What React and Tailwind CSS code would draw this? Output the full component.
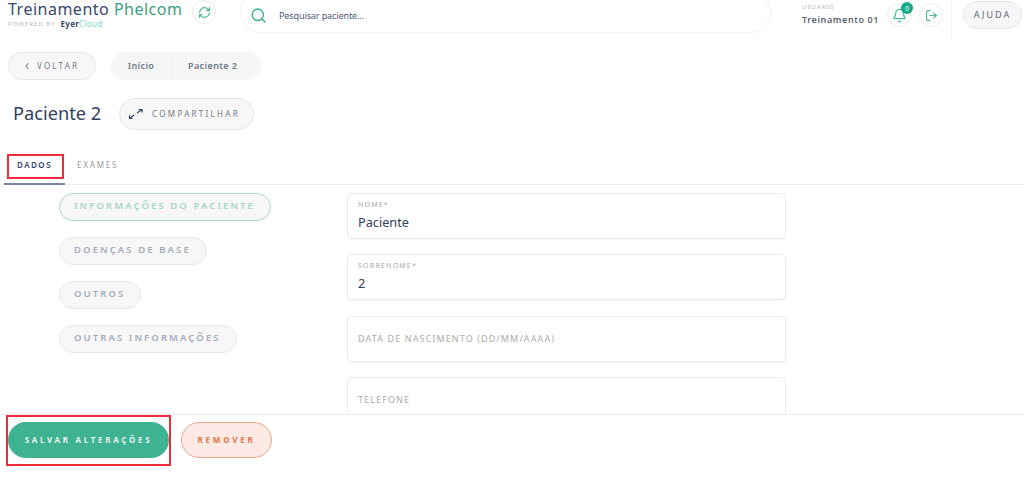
import React from 'react';
import { ChevronLeft, RefreshCw, Search, Bell, LogOut } from 'lucide-react';

const sections = [
  { label: 'INFORMAÇÕES DO PACIENTE', active: true },
  { label: 'DOENÇAS DE BASE' },
  { label: 'OUTROS' },
  { label: 'OUTRAS INFORMAÇÕES' },
];

function Field({ label, value, last }) {
  return (
    <div className={`w-[439px] shrink-0 rounded border border-[#ececec] bg-white px-[10px] shadow-[0_1px_1px_rgba(0,0,0,0.03)] ${last ? 'h-[46px]' : 'h-[46px] mb-[15.4px]'}`}>
      {value ? (
        <div>
          <div className="mt-[6px] text-[7px] leading-[10px] tracking-[1.2px] text-[#a9a9a9]">{label}</div>
          <div className="mt-[3px] text-[12.7px] leading-[18px] text-[#33415c]">{value}</div>
        </div>
      ) : (
        <div className="mt-[15px] text-[9px] leading-[14px] tracking-[1.1px] text-[#ababab]">{label}</div>
      )}
    </div>
  );
}

export default function App() {
  return (
    <div className="relative flex h-[483px] w-[1024px] flex-col overflow-hidden bg-white font-['Noto_Sans','Open_Sans',sans-serif]">
      {/* Header */}
      <div className="flex h-[52px] shrink-0 items-start">
        <div className="ml-2 w-[184px] shrink-0 pt-[1px]">
          <div className="text-[16px] leading-[16px] tracking-[0.5px] text-[#35496a]">
            Treinamento <span className="text-[#3d9d83]">Phelcom</span>
          </div>
          <div className="mt-[3px] flex items-center text-[6px] leading-[8px] tracking-[1px] text-[#b9b9b9]">
            POWERED BY
            <span className="ml-[5px] text-[8px] font-bold tracking-[0.3px] text-[#35496a]">Eyer<span className="font-normal text-[#7fd3c6]">Cloud</span></span>
          </div>
        </div>
        <div className="flex h-6 w-6 shrink-0 items-center justify-center rounded-full border border-[#ececec]">
          <RefreshCw size={13} className="text-[#45b594]" />
        </div>
        <div className="ml-6 mt-[-8px] flex h-[41px] w-[531px] shrink-0 items-center rounded-full border border-[#f1f1f1] pt-[6px] pl-[9px]">
          <Search size={17} strokeWidth={2.2} className="text-[#45b594]" />
          <span className="ml-[12px] text-[9px] tracking-[-0.1px] text-[#4a5a78]">Pesquisar paciente...</span>
        </div>
        <div className="ml-[31px] w-[85px] shrink-0 pt-[3px]">
          <div className="text-[6px] leading-[8px] tracking-[0.9px] text-[#b5b5b5]">USUÁRIO</div>
          <div className="mt-[3px] text-[9px] leading-[12px] font-semibold tracking-[0.6px] text-[#5c6670]">Treinamento 01</div>
        </div>
        <div className="relative mt-[3px] flex h-6 w-6 shrink-0 items-center justify-center rounded-full border border-[#ececec]">
          <Bell size={15} className="text-[#45c0a0]" />
          <span className="absolute top-[-2px] right-[-3px] flex h-3 w-3 items-center justify-center rounded-full bg-[#16a98c] text-[7px] leading-none text-white">0</span>
        </div>
        <div className="ml-2 mt-[3px] flex h-6 w-6 shrink-0 items-center justify-center rounded-full border border-[#ececec]">
          <LogOut size={13} className="text-[#45b594]" />
        </div>
        <div className="ml-2 h-10 w-px shrink-0 bg-[#f1f1f1]" />
        <div className="ml-[11px] mt-[1px] flex h-[28px] w-[59px] shrink-0 items-center justify-center rounded-full border border-[#e6e6e6] bg-[#f6f6f6] text-[9px] tracking-[2px] text-[#5c6670]">
          AJUDA
        </div>
      </div>

      {/* Voltar + breadcrumb */}
      <div className="flex h-[28px] shrink-0 items-center pl-2">
        <div className="flex h-[28px] w-[88px] items-center rounded-full border border-[#e6e6e6] bg-[#f7f7f7] pl-[13px] text-[8px] tracking-[2.2px] text-[#707a86]">
          <ChevronLeft size={10} strokeWidth={2.5} />
          <span className="ml-[5px]">VOLTAR</span>
        </div>
        <div className="ml-[15px] flex h-[28px] w-[150px] items-center rounded-full bg-[#f6f6f6] text-[9px] font-semibold tracking-[0.4px] text-[#707a86]">
          <span className="flex h-full w-[61px] items-center justify-center border-r border-[#eeeeee]">Início</span>
          <span className="ml-[16px]">Paciente 2</span>
        </div>
      </div>

      {/* Title */}
      <div className="mt-[18px] flex h-[32px] shrink-0 items-center pl-[13px]">
        <h1 className="-mt-[2px] text-[18.2px] leading-6 text-[#33415c]">Paciente 2</h1>
        <div className="ml-[18px] flex h-[32px] w-[135px] items-center rounded-full border border-[#e6e6e6] bg-[#f7f7f7] pl-[8px] text-[8px] tracking-[2.3px] text-[#707a86]">
          <svg width="16" height="12" viewBox="0 0 16 12" fill="none" stroke="#35496a" strokeWidth="1.2">
            <path d="M1.5 10.5 L6 7 M1.5 7.5 V10.5 H4.5" />
            <path d="M9 5 L14 1.5 M10.5 1.5 H14 V4.5" />
          </svg>
          <span className="ml-[8px]">COMPARTILHAR</span>
        </div>
      </div>

      {/* Tabs */}
      <div className="mt-[24px] flex h-[31px] shrink-0 items-start border-b border-[#ececec] pl-1">
        <div className="flex h-[31px] w-[61px] justify-center border-b-2 border-[#7d88a8] pt-[4px] text-[8px] leading-[14px] font-semibold tracking-[1.5px] text-[#35496a]">DADOS</div>
        <div className="ml-3 pt-[4px] text-[8px] leading-[14px] tracking-[1.8px] text-[#9a9a9a]">EXAMES</div>
      </div>

      {/* Content */}
      <div className="flex min-h-0 flex-1 overflow-hidden pt-[8px]">
        <div className="ml-[59px] flex w-[288px] shrink-0 flex-col items-start gap-4">
          {sections.map((s) => (
            <div
              key={s.label}
              className={`flex h-[28px] items-center rounded-full border pl-[14px] pr-[15px] pb-[2px] text-[9.5px] font-semibold tracking-[2.1px] ${s.active ? 'border-[#a9d9c8] bg-[#f7f7f7] text-[#a6d6c6]' : 'border-[#e8e8e8] bg-[#f7f7f7] text-[#a3acba]'}`}
            >
              {s.label}
            </div>
          ))}
        </div>
        <div className="flex flex-col">
          <Field label="NOME*" value="Paciente" />
          <Field label="SOBRENOME*" value="2" />
          <Field label="DATA DE NASCIMENTO (DD/MM/AAAA)" />
          <Field label="TELEFONE" last />
        </div>
      </div>

      {/* Footer */}
      <div className="flex h-[69px] shrink-0 items-start gap-3 border-t border-[#ececec] pl-2 pt-[7px]">
        <div className="flex h-9 w-[161px] items-center justify-center rounded-full bg-[#3fb391] text-[8px] font-bold tracking-[2.7px] text-[#e3f5ee]">
          SALVAR ALTERAÇÕES
        </div>
        <div className="flex h-9 w-[91px] items-center justify-center rounded-full border border-[#f0a588] bg-[#fdeae4] text-[8px] font-bold tracking-[2.8px] text-[#e0764f]">
          REMOVER
        </div>
      </div>

      {/* Red annotation boxes */}
      <div className="absolute left-[7px] top-[154px] h-[25px] w-[57px] border-2 border-[#ee2b3b]" />
      <div className="absolute left-[6px] top-[415px] h-[51px] w-[165px] border-2 border-[#ee2b3b]" />
    </div>
  );
}
